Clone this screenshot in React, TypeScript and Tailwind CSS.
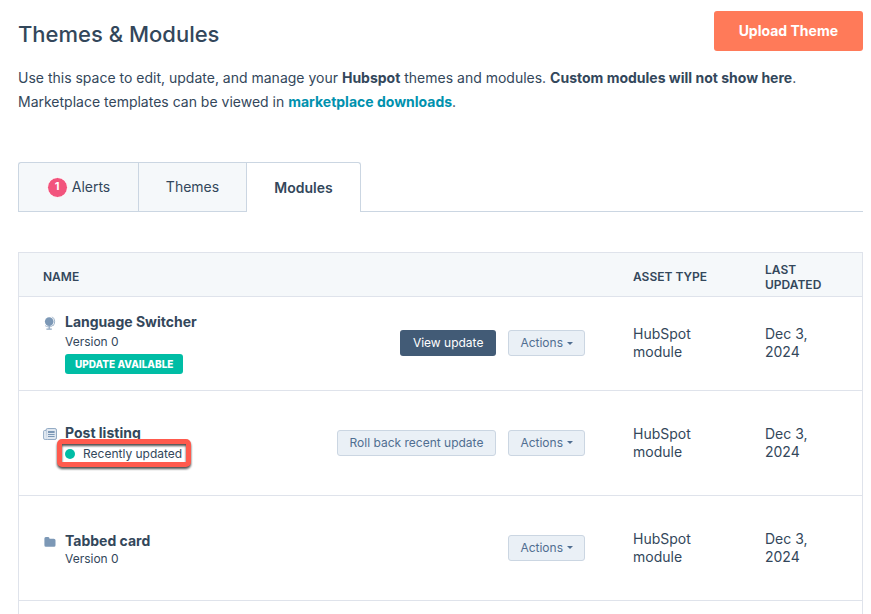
import type { ReactNode } from "react";

function GlobeIcon() {
  return (
    <svg viewBox="0 0 14 14" className="size-3.5 text-[#7c98b6]" aria-hidden="true">
      <circle cx="6.2" cy="5.6" r="4.3" fill="currentColor" />
      <path d="M9.2.8A6 6 0 0 1 9.8 10" fill="none" stroke="currentColor" strokeWidth="1" opacity="0.75" />
      <path d="M2 9.4c1.4 1.6 5.6 2.2 7.8 0" fill="none" stroke="currentColor" strokeWidth="0.9" opacity="0.75" />
      <path d="M6.2 10v3M3.4 13.2h5.4" fill="none" stroke="currentColor" strokeWidth="1.2" opacity="0.85" />
    </svg>
  );
}

function ListingIcon() {
  return (
    <svg viewBox="0 0 14 14" className="size-3.5 text-[#7c98b6]" aria-hidden="true">
      <rect x="3" y="1.5" width="10.5" height="11" rx="1.6" fill="#dfe7f0" stroke="currentColor" strokeWidth="1" strokeOpacity="0.8" />
      <path d="M3 3.5H1.6Q.5 3.5.5 4.6V11q0 1.5 1.6 1.5H4" fill="#dfe7f0" stroke="currentColor" strokeWidth="1" strokeOpacity="0.7" />
      <path d="M5 7.5h6.6M5 9.5h6.6" fill="none" stroke="currentColor" strokeWidth="1" />
      <path d="M5 4h6.6v2H5z" fill="currentColor" />
    </svg>
  );
}

function FolderIcon() {
  return (
    <svg viewBox="0 0 14 14" className="size-3.5 text-[#7c98b6]" aria-hidden="true">
      <path d="M1.4 3.6q0-1.5 1.4-1.5h2.4q1.2 0 1.4 1.6h4.3q1.6 0 1.6 1.5v5q0 1.5-1.5 1.5H2.9q-1.5 0-1.5-1.5z" fill="currentColor" />
    </svg>
  );
}

function ActionsButton() {
  return (
    <button
      type="button"
      className="flex h-[26px] items-center gap-1 rounded-[3px] border border-[#cbd6e2] bg-[#eaf0f6] px-[11px] text-xs whitespace-nowrap text-[#506e91]"
    >
      Actions
      <svg viewBox="0 0 6 3" className="h-[3px] w-1.5" aria-hidden="true">
        <path d="M0 0h6L3 3z" fill="currentColor" />
      </svg>
    </button>
  );
}

type ModuleRowProps = { icon: ReactNode; name: string; detail: ReactNode; action?: ReactNode };

function ModuleRow({ icon, name, detail, action }: ModuleRowProps) {
  return (
    <tr className="group h-[105px] border-b border-[#dfe3eb] first:h-[94px]">
      <td className="px-6">
        <div className="flex items-center justify-between">
          <div className="flex gap-2 pt-[3px] group-first:pt-0">
            <div className="pt-1">{icon}</div>
            <div>
              <div className="text-sm leading-5 font-bold">{name}</div>
              {detail}
            </div>
          </div>
          <div className="flex gap-3">
            {action}
            <ActionsButton />
          </div>
        </div>
      </td>
      <td className="px-6 text-sm leading-[18px]">HubSpot module</td>
      <td className="px-6 text-sm leading-[18px]">Dec 3, 2024</td>
    </tr>
  );
}

export default function App() {
  return (
    <main className="flex min-h-screen flex-col bg-white pt-[11px] pr-2 pl-[18px] font-['Inter','Liberation_Sans',sans-serif] text-[#33475b]">
      <header className="flex h-10 items-center justify-between">
        <h1 className="pt-1.5 text-[22px] font-medium">Themes &amp; Modules</h1>
        <button type="button" className="h-10 rounded-[3px] bg-[#ff7a59] px-[25px] text-sm font-bold text-white">
          Upload Theme
        </button>
      </header>

      <p className="mt-[15px] text-sm leading-6">
        Use this space to edit, update, and manage your <b className="font-bold">Hubspot</b> themes and modules.{" "}
        <b className="font-bold">Custom modules will not show here</b>.
        <br />
        Marketplace templates can be viewed in{" "}
        <a href="#downloads" className="font-bold text-[#0091ae]">
          marketplace downloads
        </a>
        .
      </p>

      <div role="tablist" className="mt-12 flex h-[50px] text-sm">
        <button
          type="button"
          role="tab"
          aria-selected="false"
          className="flex w-[120px] items-center justify-center gap-1 rounded-tl-[3px] border-y border-l border-[#cbd6e2] bg-[#f5f8fa]"
        >
          <span className="flex size-[21px] items-center justify-center rounded-full border border-white bg-[#f2547d] text-[11px] font-bold text-white">
            1
          </span>
          Alerts
        </button>
        <button type="button" role="tab" aria-selected="false" className="w-[108px] border-y border-l border-[#cbd6e2] bg-[#f5f8fa]">
          Themes
        </button>
        <button
          type="button"
          role="tab"
          aria-selected="true"
          className="w-[115px] rounded-tr-[3px] border-x border-t border-[#cbd6e2] bg-white font-semibold"
        >
          Modules
        </button>
        <div className="grow border-b border-[#cbd6e2]" />
      </div>

      <section className="mt-10 grow border-x border-t border-[#dfe3eb]">
        <table className="w-full table-fixed border-collapse text-left">
          <thead>
            <tr className="h-[43px] border-b border-[#dfe3eb] bg-[#f5f8fa] text-xs leading-[15px]">
              <th className="px-6 pt-[5px] font-semibold">NAME</th>
              <th className="w-[132px] px-6 pt-[5px] font-semibold whitespace-nowrap">ASSET TYPE</th>
              <th className="w-[121px] px-6 pt-[5px] font-semibold">LAST UPDATED</th>
            </tr>
          </thead>
          <tbody>
            <ModuleRow
              icon={<GlobeIcon />}
              name="Language Switcher"
              detail={
                <>
                  <div className="text-xs leading-5">Version 0</div>
                  <div className="mt-0.5 flex h-5 w-fit items-center rounded-[3px] bg-[#00bda5] px-2.5 text-[10px] font-extrabold whitespace-nowrap text-white">
                    UPDATE AVAILABLE
                  </div>
                </>
              }
              action={
                <button type="button" className="h-[26px] rounded-[3px] bg-[#425b76] px-[13px] text-xs whitespace-nowrap text-white">
                  View update
                </button>
              }
            />
            <ModuleRow
              icon={<ListingIcon />}
              name="Post listing"
              detail={
                <div className="relative flex items-center gap-2 text-xs leading-[22px]">
                  <span className="size-2.5 rounded-full bg-[#00bda5]" />
                  Recently updated
                  <span className="absolute -top-1 -right-[9px] -left-2 h-7 rounded-[5px] border-5 border-[#ff5a4d] drop-shadow-[0_2px_1px_#000000b0]" />
                </div>
              }
              action={
                <button
                  type="button"
                  className="h-[26px] rounded-[3px] border border-[#cbd6e2] bg-[#eaf0f6] px-3 text-xs whitespace-nowrap text-[#506e91]"
                >
                  Roll back recent update
                </button>
              }
            />
            <ModuleRow icon={<FolderIcon />} name="Tabbed card" detail={<div className="text-xs leading-4">Version 0</div>} />
          </tbody>
        </table>
      </section>
    </main>
  );
}
